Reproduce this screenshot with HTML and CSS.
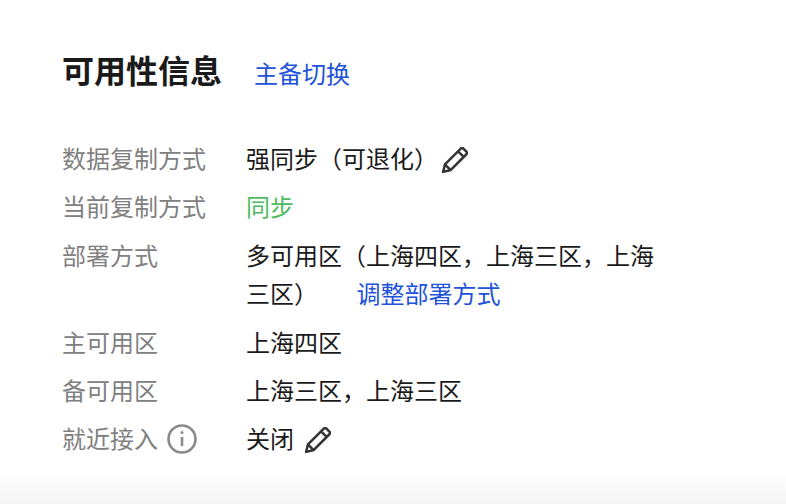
FILE: index.html
```html
<!DOCTYPE html>
<html lang="zh-CN">

<head>
  <meta charset="UTF-8">
  <title>可用性信息</title>
  <link rel="stylesheet" href="styles.css">
</head>

<body>
  <div class="panel">
    <div class="panel-header">
      <h2>可用性信息</h2>
      <a class="link switch-link">主备切换</a>
    </div>

    <div class="info-list">
      <div class="info-row">
        <div class="info-label">数据复制方式</div>
        <div class="info-value">强同步（可退化）<svg class="edit-icon edit-after-paren" viewBox="2 3 23 23"><path d="M3 25l1.6-6.6L18.6 4.4a1.6 1.6 0 0 1 2.3 0l2.7 2.7a1.6 1.6 0 0 1 0 2.3L9.600 23.400z M16.200 6.800l5 5 M4.600 18.400l5 5"/></svg></div>
      </div>
      <div class="info-row">
        <div class="info-label">当前复制方式</div>
        <div class="info-value status-ok">同步</div>
      </div>
      <div class="info-row">
        <div class="info-label">部署方式</div>
        <div class="info-value">多可用区（上海四区，上海三区，上海<br>三区） <a class="link adjust-link">调整部署方式</a></div>
      </div>
      <div class="info-row">
        <div class="info-label">主可用区</div>
        <div class="info-value">上海四区</div>
      </div>
      <div class="info-row">
        <div class="info-label">备可用区</div>
        <div class="info-value">上海三区，上海三区</div>
      </div>
      <div class="info-row">
        <div class="info-label">就近接入<svg class="help-icon" viewBox="0 0 30 30"><circle cx="15" cy="15" r="13.500"/><path d="M15 13v9"/><circle class="dot" cx="15" cy="8.500" r="1.500"/></svg></div>
        <div class="info-value">关闭<svg class="edit-icon" viewBox="2 3 23 23"><path d="M3 25l1.6-6.6L18.6 4.4a1.6 1.6 0 0 1 2.3 0l2.7 2.7a1.6 1.6 0 0 1 0 2.3L9.600 23.400z M16.200 6.800l5 5 M4.600 18.400l5 5"/></svg></div>
      </div>
    </div>
  </div>
</body>

</html>
```

FILE: styles.css
```css
body {
  margin: 0;
  height: 504px;
  overflow: hidden;
  background: linear-gradient(to bottom, #fff 470px, #f5f5f5 504px);
  font-family: "Noto Sans CJK SC", "Liberation Sans", sans-serif;
  font-size: 24px;
  color: #1a1a1a;
}

.panel {
  padding: 45px 0 0 62px;
}

.panel-header {
  display: flex;
  align-items: center;
  height: 48px;
  margin-bottom: 46px;
}

.panel-header h2 {
  margin: 0;
  font-size: 32px;
  line-height: 48px;
  font-weight: 700;
}

.link {
  color: #2152d9;
}

.switch-link {
  margin-left: 32px;
  padding-top: 6px;
}

.info-list {
  display: flex;
  flex-direction: column;
  gap: 10px;
}

.info-row {
  display: flex;
  line-height: 1.6;
}

.info-label {
  display: flex;
  align-items: center;
  align-self: flex-start;
  width: 184px;
  flex-shrink: 0;
  color: #808080;
}

.info-value {
  width: 420px;
}

.status-ok {
  color: #4dbb5f;
}

.adjust-link {
  margin-left: 33px;
}

.edit-icon {
  width: 26px;
  height: 26px;
  margin-left: 11px;
  vertical-align: -5px;
  fill: none;
  stroke: #333;
  stroke-width: 2.2;
}

.edit-after-paren {
  margin-left: 4px;
}

.help-icon {
  width: 30px;
  height: 30px;
  margin-left: 9px;
  fill: none;
  stroke: #8a8a8a;
  stroke-width: 2.6;
}

.help-icon .dot {
  fill: #8a8a8a;
  stroke: none;
}
```
